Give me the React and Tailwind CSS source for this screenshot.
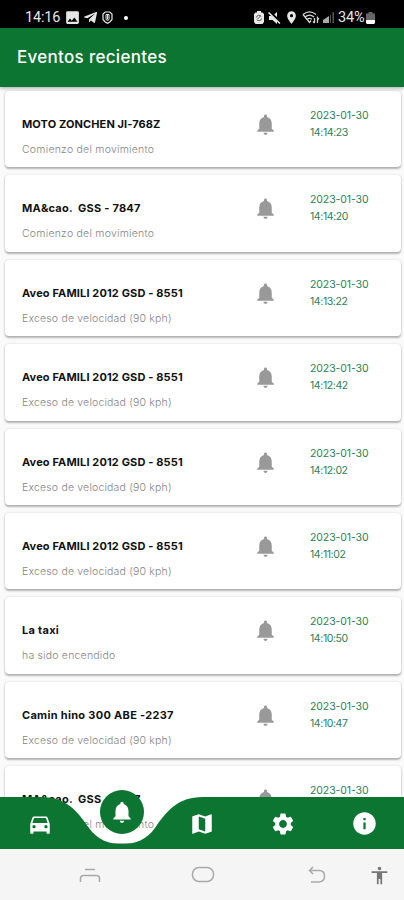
import {
  MdNotifications,
  MdDirectionsCar,
  MdMap,
  MdSettings,
  MdInfo,
  MdAccessibility,
  MdImage,
  MdLocationOn,
} from "react-icons/md";
import { FaTelegramPlane } from "react-icons/fa";

const MOVING = "Comienzo del movimiento";
const SPEEDING = "Exceso de velocidad (90 kph)";

const events = [
  { name: "MOTO ZONCHEN JI-768Z", detail: MOVING, time: "14:14:23", track: "tracking-[0.1px]", sub: "tracking-[0.23px]" },
  { name: "MA&cao.  GSS - 7847", detail: MOVING, time: "14:14:20", track: "tracking-[0.22px]", sub: "tracking-[0.23px]" },
  { name: "Aveo FAMILI 2012 GSD - 8551", detail: SPEEDING, time: "14:13:22", track: "tracking-[0.14px]", sub: "tracking-[0.18px]" },
  { name: "Aveo FAMILI 2012 GSD - 8551", detail: SPEEDING, time: "14:12:42", track: "tracking-[0.14px]", sub: "tracking-[0.18px]" },
  { name: "Aveo FAMILI 2012 GSD - 8551", detail: SPEEDING, time: "14:12:02", track: "tracking-[0.14px]", sub: "tracking-[0.18px]" },
  { name: "Aveo FAMILI 2012 GSD - 8551", detail: SPEEDING, time: "14:11:02", track: "tracking-[0.14px]", sub: "tracking-[0.18px]" },
  { name: "La taxi", detail: "ha sido encendido", time: "14:10:50", track: "tracking-[0.3px]", sub: "tracking-[0.2px]" },
  { name: "Camin hino 300 ABE -2237", detail: SPEEDING, time: "14:10:47", track: "tracking-[0.3px]", sub: "tracking-[0.18px]" },
  { name: "MA&cao.  GSS - 7847", detail: MOVING, time: "14:10:40", track: "tracking-[0.22px]", sub: "tracking-[0.23px]" },
];

function StatusBar() {
  return (
    <div className="flex h-[27.5px] shrink-0 items-center bg-black pt-[8px] pl-[25px] pr-[29px] font-[Roboto,sans-serif] text-[14.5px] leading-none text-[#e6e6e6]">
      <span className="w-[39px] tracking-[-0.2px]">14:16</span>
      <MdImage className="size-[17px]" />
      <FaTelegramPlane className="ml-[2px] size-[15px]" />
      <svg className="ml-[4px] h-[13px] w-[11px]" viewBox="0 0 11 13" fill="none" stroke="currentColor">
        <path d="M3.2 1h4.6L10 3v5.500L7.8 11l-2.3 1.3L3.2 11 1 8.500V3z" strokeWidth="1.2" />
        <path d="M4 3.500h3v5l-1.500 1L4 8.500zM5.500 3.500v5" />
      </svg>
      <span className="ml-[11px] size-[4px] rounded-full bg-white" />
      <div className="ml-auto flex items-center">
        <svg className="h-[13px] w-[10px]" viewBox="0 0 10 13">
          <path d="M3 0h4v1.500h1.500L10 3v8l-1.500 2h-7L0 11V3l1.500-1.500H3z" fill="#e8e8e8" />
          <path d="M2.300 6.500a2.800 2.800 0 0 1 5-1M7.700 7.500a2.800 2.800 0 0 1-5 1M3.500 8l3-3" stroke="#555" fill="none" />
        </svg>
        <svg className="ml-[4px] h-[12px] w-[13px]" viewBox="0 0 13 12">
          <path d="M1 4h3.500L9 0v12L4.500 8H1z" fill="#e8e8e8" />
          <path d="M1.500 0L12.500 10.500" stroke="#000" strokeWidth="3" />
          <path d="M.5 .5L12 11.500" stroke="#e8e8e8" strokeWidth="1.500" />
        </svg>
        <MdLocationOn className="ml-[3px] size-[15px]" />
        <svg className="ml-[3px] h-[13px] w-[18px]" viewBox="0 0 18 13" fill="none" stroke="#d5d5d5" strokeWidth="1.300">
          <path d="M1 3.500C5 .3 10 .3 14 3.500M3 6c3-2.500 6-2.500 9 0M5.200 8.300c1.500-1.200 3-1.200 4.600 0" />
          <path d="M1 3.500l6.500 8 1.500-2M12.500 7v5m-1.500-1.500 1.500 1.500M15.500 12V6.500l1.500 1.800" />
        </svg>
        <svg className="ml-[3px] h-[11px] w-[11px]" viewBox="0 0 11 11">
          <path d="M0 11V8l6-4v7z" fill="#aaa" />
          <path d="M7 11V3h1v8zM9.500 11V0H11v11z" fill="#555" />
        </svg>
        <span className="ml-[4px] w-[28px] tracking-[-0.2px]">34%</span>
        <svg className="h-[12px] w-[9px]" viewBox="0 0 9 12">
          <path d="M2.500 0h4v1.500H9V8H0V1.500h2.500z" fill="#666" />
          <path d="M0 8h9v3l-1 1H1l-1-1z" fill="#fff" />
        </svg>
      </div>
    </div>
  );
}

function EventCard({ event }) {
  return (
    <li className="flex h-[76.400px] shrink-0 rounded-[4px] bg-white pl-[17px] shadow-[0_1.5px_2px_rgba(0,0,0,0.27),0_0_3px_rgba(0,0,0,0.09)]">
      <div className="w-[231px] whitespace-pre pt-[25px]">
        <p className={`text-[11px] leading-[17px] font-bold text-[#111] ${event.track}`}>{event.name}</p>
        <p className={`mt-[9px] text-[10.500px] leading-[15px] font-light text-[#858585] ${event.sub}`}>{event.detail}</p>
      </div>
      <MdNotifications className="mt-[21px] size-[25px] shrink-0 text-[#999]" />
      <div className="ml-[32px] pt-[16px] text-[10.500px] leading-[17px] text-[#2c8058]">
        <p className="tracking-[-0.1px]">2023-01-30</p>
        <p className="tracking-[-0.4px]">{event.time}</p>
      </div>
    </li>
  );
}

function NavBar() {
  return (
    <nav className="absolute inset-x-0 bottom-0 h-[58px] text-white">
      <svg className="absolute bottom-0 left-0 h-[52px] w-[404px]" viewBox="0 0 404 52" fill="#0c7532">
        <path d="M0 0H41C67 0 78 15 89 31C98 43 108 47 122 47C136 47 146 43 155 31C166 15 177 0 203 0H404V52H0Z" />
      </svg>
      <div className="absolute top-[-1px] left-[100px] flex size-[44px] items-center justify-center rounded-full bg-[#0c7532]">
        <MdNotifications className="size-[26px]" />
      </div>
      <div className="relative flex h-full items-center pt-[7px]">
        <span className="flex flex-1 justify-center"><MdDirectionsCar className="size-[26px]" /></span>
        <span className="flex-1" />
        <span className="flex flex-1 justify-center pl-[2px]"><MdMap className="size-[26px]" /></span>
        <span className="flex flex-1 justify-center pl-[1px]"><MdSettings className="size-[26px]" /></span>
        <span className="flex flex-1 justify-center pl-[1px]"><MdInfo className="size-[27px]" /></span>
      </div>
    </nav>
  );
}

function SystemBar() {
  return (
    <div className="flex h-[51px] shrink-0 items-center bg-[#f5f5f5] pl-[79px] text-[#999]">
      <svg className="h-[16px] w-[22px]" viewBox="0 0 22 16" fill="none" stroke="#aaa" strokeWidth="1.500">
        <path d="M6 2.500h10M1.500 15v-3.500q0-3 3-3h13q3 0 3 3V15" />
      </svg>
      <svg className="ml-[90px] h-[17px] w-[24px]" viewBox="0 0 24 17" fill="none" stroke="#aaa" strokeWidth="1.500">
        <rect x="1.500" y="1.500" width="21" height="14" rx="6.500" />
      </svg>
      <svg className="ml-[93px] h-[18px] w-[18px]" viewBox="0 0 18 18" fill="none" stroke="#aaa" strokeWidth="1.500">
        <path d="M5 1L1.500 4.500L5 8M1.500 4.500H11q5.500 0 5.500 5.500t-5.500 6H3" />
      </svg>
      <MdAccessibility className="mt-[2px] ml-[43px] size-[21px] text-[#777]" />
    </div>
  );
}

export default function App() {
  return (
    <div className="flex h-[900px] w-[404px] flex-col overflow-hidden bg-[#fafafa] font-[Inter,sans-serif]">
      <StatusBar />
      <header className="relative z-10 flex h-[59.500px] shrink-0 items-center bg-[#0c7532] pl-[17px] text-[17px] font-medium text-white shadow-[0_1px_4px_rgba(0,0,0,0.35)]">
        <h1 className="tracking-[0.3px]">Eventos recientes</h1>
      </header>
      <main className="relative min-h-0 flex-1 overflow-hidden">
        <ul className="flex flex-col gap-[8px] pt-[4px] pr-[3px] pl-[5px]">
          {events.map((event, i) => (
            <EventCard key={i} event={event} />
          ))}
        </ul>
        <NavBar />
      </main>
      <SystemBar />
    </div>
  );
}
